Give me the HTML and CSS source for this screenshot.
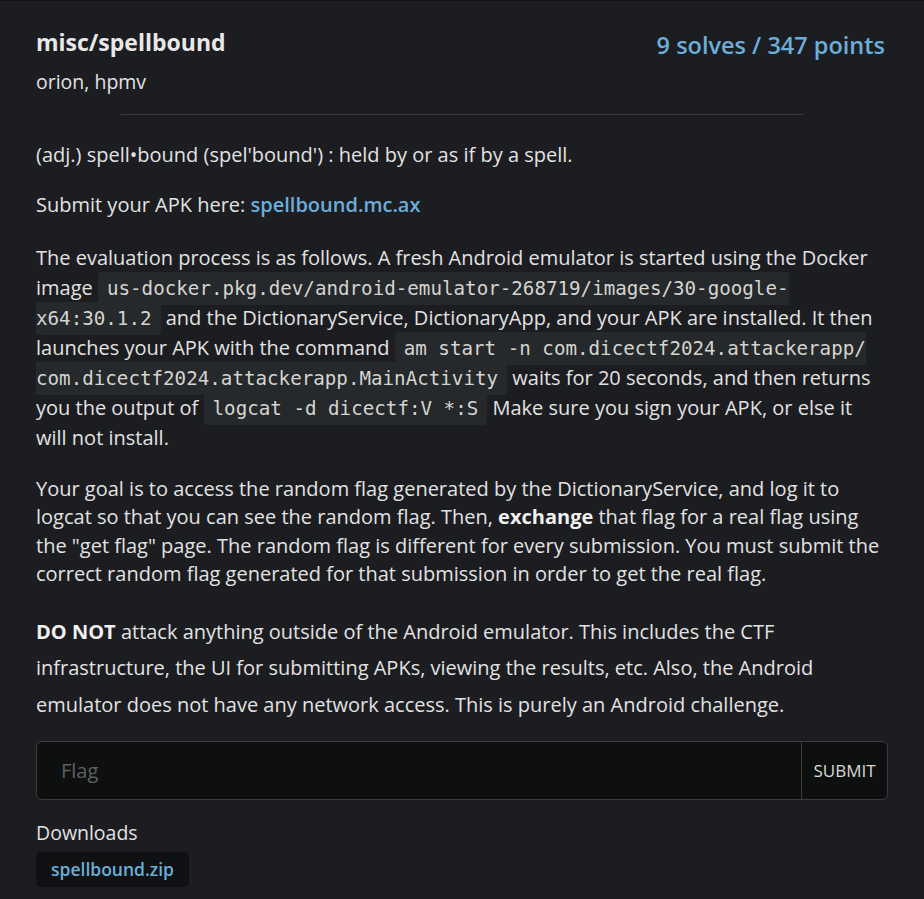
FILE: index.html
```html
<!DOCTYPE html>
<html>
<head>
<meta charset="utf-8">
<link rel="stylesheet" href="styles.css">
</head>
<body>
<div class="card">
  <div class="head">
    <div class="head-left">
      <h1 class="title">misc/spellbound</h1>
      <div class="authors">orion, hpmv</div>
    </div>
    <div class="points">9 solves / 347 points</div>
  </div>
  <hr class="rule">
  <div class="desc">
    <p class="p1">(adj.) spell•bound (spel'bound') : held by or as if by a spell.</p>
    <p class="p2">Submit your APK here: <a class="link" href="#">spellbound.mc.ax</a></p>
    <p class="p3">The evaluation process is as follows. A fresh Android emulator is started using the Docker image <code>us-docker.pkg.dev/android-emulator-268719/images/30-google-x64:30.1.2</code> and the DictionaryService, DictionaryApp, and your APK are installed. It then launches your APK with the command <code>am start -n com.dicectf2024.attackerapp/ com.dicectf2024.attackerapp.MainActivity</code> waits for 20 seconds, and then returns you the output of <code>logcat -d dicectf:V *:S</code> Make sure you sign your APK, or else it will not install.</p>
    <p class="p4">Your goal is to access the random flag generated by the DictionaryService, and log it to logcat so that you can see the random flag. Then, <strong>exchange</strong> that flag for a real flag using the "get flag" page. The random flag is different for every submission. You must submit the correct random flag generated for that submission in order to get the real flag.</p>
    <p class="p5"><strong>DO NOT</strong> attack anything outside of the Android emulator. This includes the CTF infrastructure, the UI for submitting APKs, viewing the results, etc. Also, the Android emulator does not have any network access. This is purely an Android challenge.</p>
  </div>
  <form class="flag-form">
    <input class="flag-input" type="text" placeholder="Flag">
    <button class="submit" type="button">SUBMIT</button>
  </form>
  <div class="downloads">
    <div class="dl-label">Downloads</div>
    <a class="dl-tag" href="#">spellbound.zip</a>
  </div>
</div>
</body>
</html>
```
FILE: styles.css
```css
html, body {
  margin: 0;
  padding: 0;
  background: #1c1d20;
}
body {
  font-family: "Open Sans", "Noto Sans", sans-serif;
  color: #e2e2e2;
  font-size: 20px;
}
.card {
  border-top: 1px solid #121314;
  padding: 26px 36px 20px 36px;
  min-height: 860px;
}
.head {
  display: flex;
  justify-content: space-between;
  align-items: flex-start;
}
.title {
  margin: 0;
  font-size: 23px;
  font-weight: 700;
  line-height: 30px;
  color: #e8e8e8;
}
.authors {
  margin-top: 12px;
  font-size: 19.5px;
  line-height: 26px;
}
.points {
  margin-top: 3px;
  margin-right: 3px;
  font-size: 23.5px;
  line-height: 30px;
  color: #6aaedb;
  font-weight: 600;
}
.rule {
  width: 682px;
  margin: 19px auto 0 auto;
  border: 0;
  border-top: 1px solid #3a3b3d;
  height: 0;
}
.desc {
  margin-top: 25px;
  padding-right: 6px;
}
.desc p {
  margin: 0;
}
.p1 {
  line-height: 30px;
  margin-bottom: 20px !important;
}
.p2 {
  line-height: 30px;
  margin-bottom: 23px !important;
}
.p3 {
  line-height: 30px;
  margin-bottom: 21.7px !important;
}
.p4 {
  line-height: 28.6px;
  margin-bottom: 24.7px !important;
}
.p5 {
  line-height: 36.5px;
}
.link {
  color: #6aaedb;
  font-weight: 600;
  text-decoration: none;
}
code {
  font-family: "DejaVu Sans Mono", monospace;
  font-size: 19.2px;
  line-height: 1;
  background: #26292b;
  padding: 5px 9px;
  border-radius: 4px;
  color: #d4d4d0;
}
strong {
  font-weight: 700;
  color: #f0f0f0;
}
.flag-form {
  display: flex;
  margin: 18px 0 0 0;
  height: 59px;
  box-sizing: border-box;
  border: 1px solid #3b3c3e;
  border-radius: 6px;
  background: #0e1010;
  overflow: hidden;
}
.flag-input {
  flex: 1;
  background: transparent;
  border: 0;
  outline: none;
  padding: 0 24px;
  font-family: "Open Sans", sans-serif;
  font-size: 20px;
  color: #ddd;
}
.flag-input::placeholder {
  color: #5f6060;
}
.submit {
  width: 86px;
  background: transparent;
  border: 0;
  border-left: 1px solid #3b3c3e;
  color: #d8d8d8;
  font-family: "Open Sans", sans-serif;
  font-size: 17px;
  padding: 0;
}
.downloads {
  margin-top: 20px;
}
.dl-label {
  font-size: 19.5px;
  line-height: 26px;
}
.dl-tag {
  display: inline-block;
  margin-top: 6px;
  padding: 4px 15px;
  background: #0f1112;
  border-radius: 5px;
  color: #6aaedb;
  font-weight: 600;
  font-size: 17.5px;
  line-height: 27px;
  text-decoration: none;
}
```
